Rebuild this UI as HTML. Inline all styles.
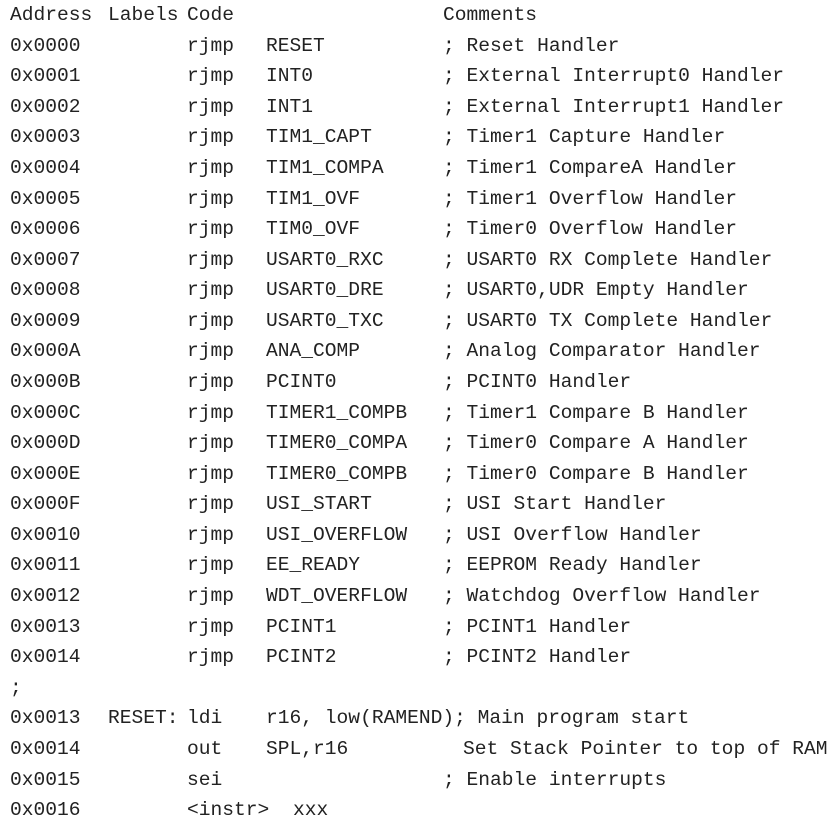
<!DOCTYPE html>
<html><head><meta charset="utf-8"><style>
html,body{margin:0;padding:0;background:#fff;width:838px;height:824px;overflow:hidden}
body{position:relative;font-family:"Liberation Mono","Courier New",monospace;font-size:19.6px;color:#222}
.w{position:absolute;left:0;top:1px;width:838px;height:824px}
.r{position:absolute;left:0;height:30px;line-height:30px;white-space:pre}
.r span{position:absolute;top:0}
.a{left:10px}.l{left:108px}.c{left:187px}.o{left:266px}.m{left:443px}
</style></head><body><div class="w">
<div class="r" style="top:-1px"><span class="a">Address</span><span class="l">Labels</span><span class="c">Code</span><span class="m">Comments</span></div>
<div class="r" style="top:29.6px"><span class="a">0x0000</span><span class="c">rjmp</span><span class="o">RESET</span><span class="m">; Reset Handler</span></div>
<div class="r" style="top:60.2px"><span class="a">0x0001</span><span class="c">rjmp</span><span class="o">INT0</span><span class="m">; External Interrupt0 Handler</span></div>
<div class="r" style="top:90.7px"><span class="a">0x0002</span><span class="c">rjmp</span><span class="o">INT1</span><span class="m">; External Interrupt1 Handler</span></div>
<div class="r" style="top:121.3px"><span class="a">0x0003</span><span class="c">rjmp</span><span class="o">TIM1_CAPT</span><span class="m">; Timer1 Capture Handler</span></div>
<div class="r" style="top:151.9px"><span class="a">0x0004</span><span class="c">rjmp</span><span class="o">TIM1_COMPA</span><span class="m">; Timer1 CompareA Handler</span></div>
<div class="r" style="top:182.5px"><span class="a">0x0005</span><span class="c">rjmp</span><span class="o">TIM1_OVF</span><span class="m">; Timer1 Overflow Handler</span></div>
<div class="r" style="top:213.1px"><span class="a">0x0006</span><span class="c">rjmp</span><span class="o">TIM0_OVF</span><span class="m">; Timer0 Overflow Handler</span></div>
<div class="r" style="top:243.6px"><span class="a">0x0007</span><span class="c">rjmp</span><span class="o">USART0_RXC</span><span class="m">; USART0 RX Complete Handler</span></div>
<div class="r" style="top:274.2px"><span class="a">0x0008</span><span class="c">rjmp</span><span class="o">USART0_DRE</span><span class="m">; USART0,UDR Empty Handler</span></div>
<div class="r" style="top:304.8px"><span class="a">0x0009</span><span class="c">rjmp</span><span class="o">USART0_TXC</span><span class="m">; USART0 TX Complete Handler</span></div>
<div class="r" style="top:335.4px"><span class="a">0x000A</span><span class="c">rjmp</span><span class="o">ANA_COMP</span><span class="m">; Analog Comparator Handler</span></div>
<div class="r" style="top:366px"><span class="a">0x000B</span><span class="c">rjmp</span><span class="o">PCINT0</span><span class="m">; PCINT0 Handler</span></div>
<div class="r" style="top:396.5px"><span class="a">0x000C</span><span class="c">rjmp</span><span class="o">TIMER1_COMPB</span><span class="m">; Timer1 Compare B Handler</span></div>
<div class="r" style="top:427.1px"><span class="a">0x000D</span><span class="c">rjmp</span><span class="o">TIMER0_COMPA</span><span class="m">; Timer0 Compare A Handler</span></div>
<div class="r" style="top:457.7px"><span class="a">0x000E</span><span class="c">rjmp</span><span class="o">TIMER0_COMPB</span><span class="m">; Timer0 Compare B Handler</span></div>
<div class="r" style="top:488.3px"><span class="a">0x000F</span><span class="c">rjmp</span><span class="o">USI_START</span><span class="m">; USI Start Handler</span></div>
<div class="r" style="top:518.9px"><span class="a">0x0010</span><span class="c">rjmp</span><span class="o">USI_OVERFLOW</span><span class="m">; USI Overflow Handler</span></div>
<div class="r" style="top:549.4px"><span class="a">0x0011</span><span class="c">rjmp</span><span class="o">EE_READY</span><span class="m">; EEPROM Ready Handler</span></div>
<div class="r" style="top:580px"><span class="a">0x0012</span><span class="c">rjmp</span><span class="o">WDT_OVERFLOW</span><span class="m">; Watchdog Overflow Handler</span></div>
<div class="r" style="top:610.6px"><span class="a">0x0013</span><span class="c">rjmp</span><span class="o">PCINT1</span><span class="m">; PCINT1 Handler</span></div>
<div class="r" style="top:641.2px"><span class="a">0x0014</span><span class="c">rjmp</span><span class="o">PCINT2</span><span class="m">; PCINT2 Handler</span></div>
<div class="r" style="top:671.8px"><span class="a">;</span></div>
<div class="r" style="top:702.3px"><span class="a">0x0013</span><span class="l">RESET:</span><span class="c">ldi</span><span class="o">r16, low(RAMEND); Main program start</span></div>
<div class="r" style="top:732.9px"><span class="a">0x0014</span><span class="c">out</span><span class="o">SPL,r16</span><span style="left:463px">Set Stack Pointer to top of RAM</span></div>
<div class="r" style="top:763.5px"><span class="a">0x0015</span><span class="c">sei</span><span class="m">; Enable interrupts</span></div>
<div class="r" style="top:794.1px"><span class="a">0x0016</span><span class="c">&lt;instr&gt;</span><span style="left:293px">xxx</span></div>
</div></body></html>
